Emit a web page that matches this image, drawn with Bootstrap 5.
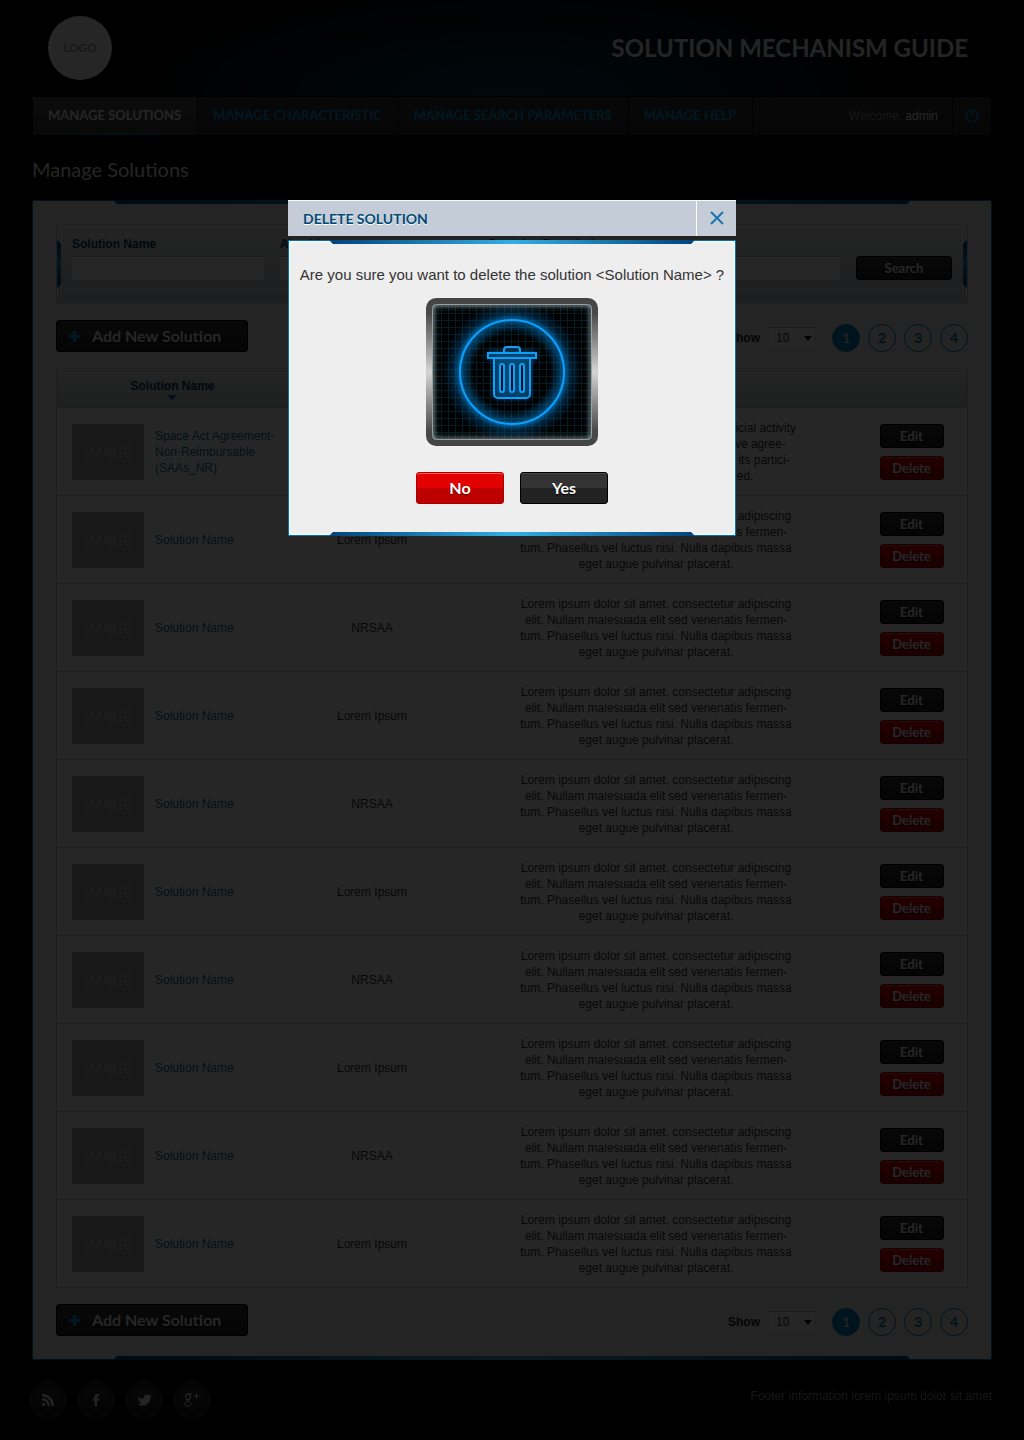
<!DOCTYPE html>
<html lang="en">
<head>
<meta charset="utf-8">
<meta name="viewport" content="width=device-width, initial-scale=1">
<title>Solution Mechanism Guide</title>
<link href="https://cdn.jsdelivr.net/npm/bootstrap@5.3.0/dist/css/bootstrap.min.css" rel="stylesheet">
<style>
:root { --ui: Lato, "Open Sans", sans-serif; --blue: #009be0; --navy: #003a63; }
body { font: 12px/16px "Liberation Sans", Arial, sans-serif; color: #333; background-color: #000; font-variant-ligatures: none;
  background-image:
    radial-gradient(circle at 30px 40px, #555 0, transparent 1px), radial-gradient(circle at 170px 130px, #444 0, transparent 1px),
    radial-gradient(circle at 95px 210px, #333 0, transparent 1px), radial-gradient(circle at 240px 20px, #444 0, transparent 1px);
  background-size: 271px 233px; }
.site { background: radial-gradient(ellipse 400px 120px at 50% 96px, #003a55, transparent) top / 100% 96px no-repeat; }
.site, .dialog-wrap, .site *, .dialog-wrap * { font-variant-ligatures: none; }
.logo { width: 64px; height: 64px; background: #fff; color: #6f8795; font: 12px/16px var(--ui); }
.brand-title { font: bold 24px/32px var(--ui); color: #f0f0f2; }
.main-nav { height: 39px; margin: 0 1px; border-top: 1px solid #000; border-radius: 2px; background: linear-gradient(#343434 50%, #282828 50%); }
.main-nav a { font: bold 13px/37px var(--ui); color: var(--blue); text-decoration: none; }
.main-nav .tab { padding: 0 16px 0 15px; border-right: 1px solid #121212; }
.main-nav .tab.current { color: #f4f4f4; background: radial-gradient(ellipse 80px 3px at 50% 100%, #007fb8, transparent), linear-gradient(#4c4c4c 50%, #404040 50%); }
.main-nav .hello { color: #949494; padding-right: 14px; }
.main-nav .hello strong { color: #fff; font-weight: 400; }
.main-nav .power { width: 39px; border-left: 1px solid #121212; color: #00b0ff; }
.page-title { font: 20px/24px var(--ui); color: #eee; margin: 22px 0 19px; }
.sheet { background: #eee; border: 1px solid #0071ad; padding: 23px; }
.sheet::before, .sheet::after, .dialog-body::before, .dialog-body::after { content: ""; position: absolute; height: 4px; background: linear-gradient(90deg, #00447a, #33aee3 50%, #00447a); }
.sheet::before, .sheet::after { left: 80px; right: 80px; }
.sheet::before, .dialog-body::before { top: -1px; clip-path: polygon(0 0, 100% 0, calc(100% - 4px) 100%, 4px 100%); }
.sheet::after, .dialog-body::after { bottom: -1px; clip-path: polygon(4px 0, calc(100% - 4px) 0, 100% 100%, 0 100%); }
.filter { height: 80px; padding: 11px 15px 0; border: 1px solid #c6c6c6; background: linear-gradient(#eee, #c0c7d0); box-shadow: inset 0 0 0 1px #f8f8f8; margin-bottom: 16px; }
.filter::before, .filter::after { content: ""; position: absolute; top: 15px; width: 4px; height: 48px; background: linear-gradient(#003a6b, #1e93cf, #003a6b); }
.filter::before { left: 0; clip-path: polygon(0 0, 100% 4px, 100% calc(100% - 4px), 0 100%); }
.filter::after { right: 0; clip-path: polygon(100% 0, 0 4px, 0 calc(100% - 4px), 100% 100%); }
.filter label { font-weight: bold; color: var(--navy); line-height: 16px; margin-bottom: 4px; display: block; }
.filter input { width: 100%; height: 24px; border: 0; border-top: 1px solid #b4bfca; background: #fff; padding: 0 8px; display: block; }
.f-name { flex: 192 1 0; min-width: 0; }
.f-desc { flex: 352 1 0; min-width: 0; }
.pill { border: 1px solid #000; border-radius: 3px; color: #fff; background: linear-gradient(#333 50%, #222 50%); font: bold 13px/22px var(--ui); padding: 0; text-align: center; text-shadow: 0 1px 1px #000; box-shadow: inset 0 1px 0 #484848; }
.pill.red { border-color: #a80000; background: linear-gradient(#e20000 50%, #bd0000 50%); box-shadow: inset 0 1px 0 #f55; text-shadow: 0 1px 1px #600; }
.pill.find { width: 96px; }
.pill.row-act { width: 64px; display: block; margin: 0 auto; }
.pill.large { font-size: 16px; line-height: 30px; }
.pill.answer { width: 88px; }
.pill.add { width: 192px; }
.show label { font-weight: bold; color: #222; }
.show .pick { position: relative; }
.show select { width: 48px; height: 22px; margin: 0 16px 0 8px; padding: 0 7px; border: 1px solid #e4e4e4; border-top-color: #bbb; font-size: 12px; color: #222; background: #fff; appearance: none; }
.show .pick::after { content: ""; position: absolute; right: 20px; top: 9px; border: 4px solid transparent; border-top: 5px solid #111; border-bottom: 0; pointer-events: none; }
.dot { width: 28px; height: 28px; border: 1px solid #0084c2; border-radius: 50%; color: #0078b0; font: bold 14px/26px var(--ui); text-align: center; text-decoration: none; }
.dot.on { background: #0084bf; color: #c4ecff; }
.grid { width: 100%; table-layout: fixed; border: 1px solid #c6c6c6; margin: 16px 0; background: #fff; border-collapse: separate; border-spacing: 0; }
.grid th { height: 39px; padding: 0 0 5px; text-align: center; vertical-align: middle; color: var(--navy); background: linear-gradient(#eee, #c4cbd0); border-bottom: 1px solid #c6c6c6; }
.grid td { height: 88px; padding: 0; text-align: center; vertical-align: middle; border-bottom: 1px solid #c6c6c6; }
.grid tbody tr:last-child td { border-bottom: 0; height: 87px; }
.grid th span { position: relative; }
.grid th span::after { content: ""; position: absolute; left: 50%; margin-left: -5px; top: 16px; border: 5px solid transparent; border-top-color: #0072a8; border-bottom: 0; }
.c-name { width: 231px; }
.c-alias { width: 168px; }
.c-act { width: 111px; }
.thumb { width: 72px; height: 56px; margin: 0 11px 0 15px; background: #a0a0a0; color: #c8c8c8; font: 15px/56px var(--ui); text-align: center; }
.grid a { color: #0072a6; text-decoration: none; text-align: left; }
.foot { padding: 24px 0; }
.social { width: 32px; height: 32px; border-radius: 50%; background: linear-gradient(#2e2e2e, #1c1c1c); border: 1px solid #0a0a0a; box-shadow: 0 0 5px 1px #585858; color: #f0f0f0; }
.foot p { color: #949494; margin: 4px 0 0; }
.shade { position: absolute; inset: 0; background: rgba(0,0,0,.85); z-index: 10; }
.dialog-wrap { position: absolute; top: 200px; left: 0; right: 0; z-index: 11; }
.dialog-box { width: 448px; max-width: 100%; margin: 0 auto; }
.dialog-head { height: 36px; background: #c4ccd7; border-top: 1px solid #f4f6f8; margin-bottom: 4px; }
.dialog-head h2 { font: bold 14px/36px var(--ui); color: #004a73; margin: 0; padding-left: 15px; text-shadow: 0 1px 0 #fff; }
.dialog-head button { width: 40px; border: 0; border-left: 1px solid #fff; background: none; padding: 0 0 3px; color: #1a76ac; }
.dialog-body { position: relative; background: #eee; border: 1px solid #0071ad; box-shadow: inset 0 0 0 1px #fff; padding: 24px 0 31px; text-align: center; }
.dialog-body::before, .dialog-body::after { left: 40px; right: 40px; }
.dialog-body p { font-size: 15px; line-height: 20px; color: #333; margin: 0 0 13px; }
.dialog-body svg { display: block; margin: 0 auto 26px; }
</style>
<script src="https://cdn.jsdelivr.net/npm/bootstrap@5.3.0/dist/js/bootstrap.bundle.min.js"></script>
</head>
<body class="position-relative min-vh-100">
<div class="site px-3"><div class="px-3">
  <header class="d-flex align-items-center justify-content-between p-3">
    <div class="logo rounded-circle d-flex align-items-center justify-content-center">LOGO</div>
    <div class="brand-title pe-2">SOLUTION MECHANISM GUIDE</div>
  </header>
  <nav class="main-nav d-flex">
    <a class="tab current" href="#">MANAGE SOLUTIONS</a>
    <a class="tab" href="#">MANAGE CHARACTERISTIC</a>
    <a class="tab" href="#">MANAGE SEARCH PARAMETERS</a>
    <a class="tab" href="#">MANAGE HELP</a>
    <span class="hello ms-auto align-self-center">Welcome, <strong>admin</strong></span>
    <a class="power d-flex align-items-center justify-content-center" href="#" aria-label="Log out">
      <svg width="14" height="14" viewBox="0 0 14 14" fill="none" stroke="currentColor" stroke-width="1.2"><path d="M5 1.100a6 6 0 1 0 4 0M7 0v7.500"/></svg>
    </a>
  </nav>
  <h1 class="page-title">Manage Solutions</h1>

  <main class="sheet position-relative">
    <form class="filter position-relative d-flex gap-3">
      <div class="f-name"><label for="q1">Solution Name</label><input id="q1" type="text"></div>
      <div class="f-name"><label for="q2">Also Id</label><input id="q2" type="text"></div>
      <div class="f-desc"><label for="q3">Contains Description</label><input id="q3" type="text"></div>
      <div class="pt-1"><button type="button" class="pill find mt-3">Search</button></div>
    </form>
    <div class="bar d-flex justify-content-between align-items-end"></div>
    <table class="grid">
      <colgroup><col class="c-name"><col class="c-alias"><col><col class="c-act"></colgroup>
      <thead><tr><th scope="col"><span>Solution Name</span></th><th scope="col">Alias</th><th scope="col">Description</th><th></th></tr></thead>
      <tbody id="rows"></tbody>
    </table>
    <div class="bar d-flex justify-content-between align-items-end"></div>
  </main>

  <footer class="foot d-flex justify-content-between align-items-start">
    <div class="d-flex gap-3">
      <a class="social d-flex align-items-center justify-content-center" href="#" aria-label="RSS"><svg width="12" height="12" viewBox="0 0 12 12" fill="none" stroke="currentColor" stroke-width="2.2"><circle cx="1.7" cy="10.3" r="1.6" fill="currentColor" stroke="none"/><path d="M0 5.2a6.8 6.8 0 0 1 6.8 6.8M0 1.2A10.8 10.8 0 0 1 10.8 12"/></svg></a>
      <a class="social d-flex align-items-center justify-content-center" href="#" aria-label="Facebook"><svg width="7" height="12" viewBox="0 0 7 12" fill="currentColor"><path d="M1.600 12V6.600H0V4.400h1.600V2.800C1.600 1 2.500 0 4.400 0H6.200v2.200H5c-.8 0-.9.3-.9.9v1.300h2.100L6 6.600H4.100V12z"/></svg></a>
      <a class="social d-flex align-items-center justify-content-center" href="#" aria-label="Twitter"><svg width="15" height="12" viewBox="0 0 15 12" fill="currentColor"><path d="M0 2.200C2 4.200 4.300 4.800 6.600 4.800 6.200 2 8.200.2 10.200.4c1 0 1.700.4 2.200 1L14 .8l-.6 1.500 1.600-.1-1.700 1.600C13.200 9 9.800 11.600 6 11.600c-2 0-3.600-.4-5-1.400 1.500.1 3-.2 4-1.100-1.400 0-2.400-.8-2.800-1.900h1.200C2 6.700 1.100 5.700 1 4.400l1.300.3C1 4 .3 3.300 0 2.200z"/></svg></a>
      <a class="social d-flex align-items-center justify-content-center" href="#" aria-label="Google Plus"><svg width="16" height="14" viewBox="0 0 16 14" fill="none" stroke="currentColor"><ellipse cx="4" cy="3.800" rx="2.300" ry="2.900" stroke-width="1.300"/><path d="M4.500.8H8M3 6.600c-1.500 1.200 3.900 1.400 3.900 4 0 3.300-6.300 3.300-6.300.5C.6 9 3 8.500 4.500 8.500M12.500 0v6M9.500 3h6"/></svg></a>
    </div>
    <p>Footer information lorem ipsum dolor sit amet</p>
  </footer>
</div></div>

<div class="shade"></div>
<div class="dialog-wrap" role="dialog" aria-labelledby="dlg-title">
  <div class="dialog-box">
    <div class="dialog-head d-flex justify-content-between">
      <h2 id="dlg-title">DELETE SOLUTION</h2>
      <button type="button" aria-label="Close"><svg width="14" height="14" viewBox="0 0 14 14" stroke="currentColor" stroke-width="2"><path d="M1 1l12 12M13 1L1 13"/></svg></button>
    </div>
    <div class="dialog-body">
      <p>Are you sure you want to delete the solution &lt;Solution Name&gt; ?</p>
      <svg width="172" height="148" viewBox="0 0 172 148" fill="none" aria-hidden="true">
        <defs>
          <linearGradient id="steel" x2="0" y2="1"><stop stop-color="#444"/><stop offset=".1" stop-color="#484848"/><stop offset=".5" stop-color="#d4d4d4"/><stop offset=".9" stop-color="#484848"/><stop offset="1" stop-color="#444"/></linearGradient>
          <radialGradient id="glow"><stop offset=".55" stop-color="#0087d8" stop-opacity="0"/><stop offset=".76" stop-color="#0090e8" stop-opacity=".6"/><stop offset=".84" stop-color="#0074c0" stop-opacity=".28"/><stop offset="1" stop-color="#0060a0" stop-opacity="0"/></radialGradient>
          <pattern id="mesh" width="7" height="7" patternUnits="userSpaceOnUse" x="1" y="1"><path d="M.5 0v7M0 .5h7" stroke="#041c26"/></pattern>
          <filter id="soft" x="-30%" y="-30%" width="160%" height="160%"><feGaussianBlur stdDeviation="3"/></filter>
          <clipPath id="screen"><rect x="6" y="6" width="160" height="136" rx="4"/></clipPath>
        </defs>
        <rect width="172" height="148" rx="10" fill="url(#steel)"/>
        <g clip-path="url(#screen)">
          <rect x="6" y="6" width="160" height="136" fill="#000"/>
          <rect x="6" y="6" width="160" height="136" fill="url(#mesh)"/>
          <rect x="5" y="5" width="162" height="138" rx="5" stroke="#b9d0d4" stroke-width="4" filter="url(#soft)"/>
          <circle cx="86" cy="74" r="70" fill="url(#glow)"/>
        </g>
        <rect x="6.500" y="6.500" width="159" height="135" rx="4" stroke="#93a2a6"/>
        <circle cx="86" cy="74" r="52" stroke="#0aa0ff" stroke-width="2"/>
        <path d="M62 54h48v6h-6v36a4 4 0 0 1-4 4H72a4 4 0 0 1-4-4V60h-6z" fill="#0084d0" opacity=".7" filter="url(#soft)"/>
        <path d="M62 55h48v5H62zM78 54v-2a3 3 0 0 1 3-3h10a3 3 0 0 1 3 3v2M68 61v35a4 4 0 0 0 4 4h28a4 4 0 0 0 4-4V61" fill="#00385c" fill-opacity=".6" stroke="#0aa0ff" stroke-width="2"/>
        <g fill="#02101a" stroke="#0aa0ff" stroke-width="2"><rect x="74" y="66" width="4" height="28" rx="2"/><rect x="84" y="66" width="4" height="28" rx="2"/><rect x="94" y="66" width="4" height="28" rx="2"/></g>
      </svg>
      <div class="d-flex justify-content-center gap-3">
        <button type="button" class="pill red large answer">No</button>
        <button type="button" class="pill large answer">Yes</button>
      </div>
    </div>
  </div>
</div>

<script>
const lorem = ['Lorem ipsum dolor sit amet, consectetur adipiscing', 'elit. Nullam malesuada elit sed venenatis fermen-', 'tum. Phasellus vel luctus nisi. Nulla dapibus massa', 'eget augue pulvinar placerat.'];
const first = { name: 'Space Act Agreement-<br>Non-Reimbursable<br>(SAAs_NR)', alias: 'NRSAA',
  text: ['Agreements involving NASA in one beneficial activity', 'with one or more parties. The cooperative agree-', 'ment lets each party bear the full cost of its partici-', 'pation, and no funds are exchanged.'] };
const items = [first];
for (let i = 1; i < 10; i++) items.push({ name: 'Solution Name', alias: i % 2 ? 'Lorem Ipsum' : 'NRSAA', text: lorem });
document.getElementById('rows').innerHTML = items.map(r => `
  <tr><td><div class="d-flex align-items-center"><div class="thumb flex-shrink-0">IMAGE</div><a href="#">${r.name}</a></div></td>
  <td>${r.alias}</td><td>${r.text.join('<br>')}</td>
  <td><button type="button" class="pill row-act mb-2">Edit</button><button type="button" class="pill red row-act">Delete</button></td></tr>`).join('');
document.querySelectorAll('.bar').forEach((bar, i) => {
  bar.innerHTML = `
  <button type="button" class="pill large add d-flex align-items-center"><svg class="ms-2 me-2" width="19" height="11" viewBox="-4 0 19 11" stroke="#00a0e0" stroke-width="3"><path d="M0 5.500h11M5.500 0v11"/></svg>Add New Solution</button>
  <div class="show d-flex align-items-center"><label for="n${i}">Show</label><div class="pick d-flex"><select id="n${i}"><option>10</option><option>20</option></select></div>
  <div class="d-flex gap-2"><a class="dot on" href="#">1</a><a class="dot" href="#">2</a><a class="dot" href="#">3</a><a class="dot" href="#">4</a></div></div>`;
});
</script>
</body>
</html>
